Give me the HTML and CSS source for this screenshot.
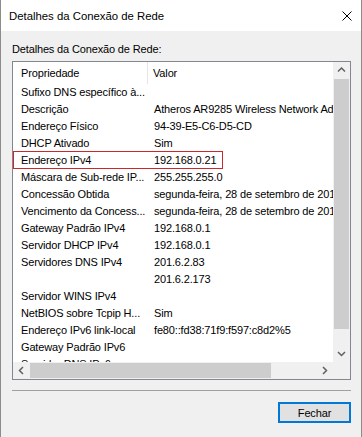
FILE: index.html
```html
<!DOCTYPE html>
<html lang="pt-BR">
<head>
  <meta charset="UTF-8">
  <title>Detalhes da Conexão de Rede</title>
  <link rel="stylesheet" href="styles.css">
</head>
<body>
  <div class="window">
    <div class="titlebar">
      <span class="title">Detalhes da Conexão de Rede</span>
      <svg class="close" width="10" height="10" viewBox="0 0 10 10">
        <path d="M0.5 0.5 L9.5 9.5 M9.5 0.5 L0.5 9.5" stroke="#000" stroke-width="1" fill="none"/>
      </svg>
    </div>

    <div class="content">
      <div class="caption">Detalhes da Conexão de Rede:</div>

      <div class="listbox">
        <div class="list">
          <div class="head">
            <div class="c1">Propriedade</div>
            <div class="c2">Valor</div>
          </div>
          <div class="row"><div class="c1">Sufixo DNS específico à...</div><div class="c2"></div></div>
          <div class="row"><div class="c1">Descrição</div><div class="c2">Atheros AR9285 Wireless Network Adapter</div></div>
          <div class="row"><div class="c1">Endereço Físico</div><div class="c2">94-39-E5-C6-D5-CD</div></div>
          <div class="row"><div class="c1">DHCP Ativado</div><div class="c2">Sim</div></div>
          <div class="row marked"><div class="c1">Endereço IPv4</div><div class="c2">192.168.0.21</div><span class="mark"></span></div>
          <div class="row"><div class="c1">Máscara de Sub-rede IP...</div><div class="c2">255.255.255.0</div></div>
          <div class="row"><div class="c1">Concessão Obtida</div><div class="c2">segunda-feira, 28 de setembro de 2015 09:12:40</div></div>
          <div class="row"><div class="c1">Vencimento da Concess...</div><div class="c2">segunda-feira, 28 de setembro de 2015 12:12:40</div></div>
          <div class="row"><div class="c1">Gateway Padrão IPv4</div><div class="c2">192.168.0.1</div></div>
          <div class="row"><div class="c1">Servidor DHCP IPv4</div><div class="c2">192.168.0.1</div></div>
          <div class="row"><div class="c1">Servidores DNS IPv4</div><div class="c2">201.6.2.83</div></div>
          <div class="row"><div class="c1"></div><div class="c2">201.6.2.173</div></div>
          <div class="row"><div class="c1">Servidor WINS IPv4</div><div class="c2"></div></div>
          <div class="row"><div class="c1">NetBIOS sobre Tcpip H...</div><div class="c2">Sim</div></div>
          <div class="row"><div class="c1">Endereço IPv6 link-local</div><div class="c2">fe80::fd38:71f9:f597:c8d2%5</div></div>
          <div class="row"><div class="c1">Gateway Padrão IPv6</div><div class="c2"></div></div>
          <div class="row"><div class="c1">Servidor DNS IPv6</div><div class="c2"></div></div>
        </div>

        <div class="vscroll">
          <div class="sbtn">
            <svg width="17" height="17" viewBox="0 0 17 17"><polyline points="5,9.5 8.5,6 12,9.5" stroke="#606060" stroke-width="1.5" fill="none"/></svg>
          </div>
          <div class="vthumb"></div>
          <div class="vtrack"></div>
          <div class="sbtn">
            <svg width="17" height="17" viewBox="0 0 17 17"><polyline points="5,7 8.5,10.5 12,7" stroke="#606060" stroke-width="1.5" fill="none"/></svg>
          </div>
        </div>

        <div class="hscroll">
          <div class="sbtn">
            <svg width="17" height="17" viewBox="0 0 17 17"><polyline points="10,5 6.5,8.5 10,12" stroke="#606060" stroke-width="1.5" fill="none"/></svg>
          </div>
          <div class="hthumb"></div>
          <div class="htrack"></div>
          <div class="sbtn">
            <svg width="17" height="17" viewBox="0 0 17 17"><polyline points="7,5 10.5,8.5 7,12" stroke="#606060" stroke-width="1.5" fill="none"/></svg>
          </div>
        </div>
        <div class="corner"></div>
      </div>

      <div class="sep"></div>

      <div class="actions">
        <button class="btn">Fechar</button>
      </div>
    </div>
  </div>
</body>
</html>
```

FILE: styles.css
```css
html, body { margin: 0; padding: 0; overflow: hidden; }
body {
  font-family: "Liberation Sans", Arial, sans-serif;
  font-size: 11px; letter-spacing: -0.15px; color: #000;
  background-color: #f0f0f0;
}
.window {
  width: 362px; height: 437px; box-sizing: border-box;
  border: 1px solid #8c8c8c; border-top: none; border-bottom: none;
  background-color: #f0f0f0;
}
.titlebar {
  height: 31px; background-color: #fff;
  display: flex; align-items: center; justify-content: space-between;
  padding: 0 9px 0 8px;
}
.title { font-size: 11.35px; letter-spacing: 0; }
.close { display: block; }

.content { padding: 10px 10px 0 11px; }
.caption { line-height: 16px; margin-bottom: 4px; }

.listbox {
  border: 1px solid #828790; background-color: #fff;
  display: grid; grid-template-columns: 320px 17px; grid-template-rows: 300px 17px;
}
.list { overflow: hidden; background-color: #fff; }
.head, .row { display: flex; white-space: nowrap; }
.head { height: 22px; line-height: 22px; }
.row { height: 17px; line-height: 17px; position: relative; }
.c1 { flex: none; width: 135px; box-sizing: border-box; padding-left: 8px; overflow: hidden; }
.c2 { flex: none; padding-left: 6px; }
.head .c1 { border-right: 1px solid #e5e5e5; }
.head .c2 { padding-left: 5px; }
.mark {
  position: absolute; left: 0; top: -1px; width: 210px; height: 18px;
  box-sizing: border-box; border: 1px solid #c8282e;
}

.vscroll, .hscroll, .corner { background-color: #f0f0f0; }
.vscroll { display: flex; flex-direction: column; }
.hscroll { display: flex; }
.sbtn { width: 17px; height: 17px; flex: none; }
.sbtn svg { display: block; }
.vthumb { height: 250px; margin: 0 1px; background-color: #cdcdcd; }
.vtrack { flex: 1; }
.hthumb { width: 241px; margin: 1px 0; background-color: #cdcdcd; }
.htrack { flex: 1; }

.sep { margin-top: 10px; height: 1px; background-color: #a0a0a0; }
.actions { display: flex; justify-content: flex-end; margin-top: 11px; }
.btn {
  width: 73px; height: 21px; padding: 0; box-sizing: border-box;
  border: 2px solid #0078d7; background-color: #e1e1e1;
  font-family: inherit; font-size: 11px; letter-spacing: -0.15px; color: #000;
}
```
